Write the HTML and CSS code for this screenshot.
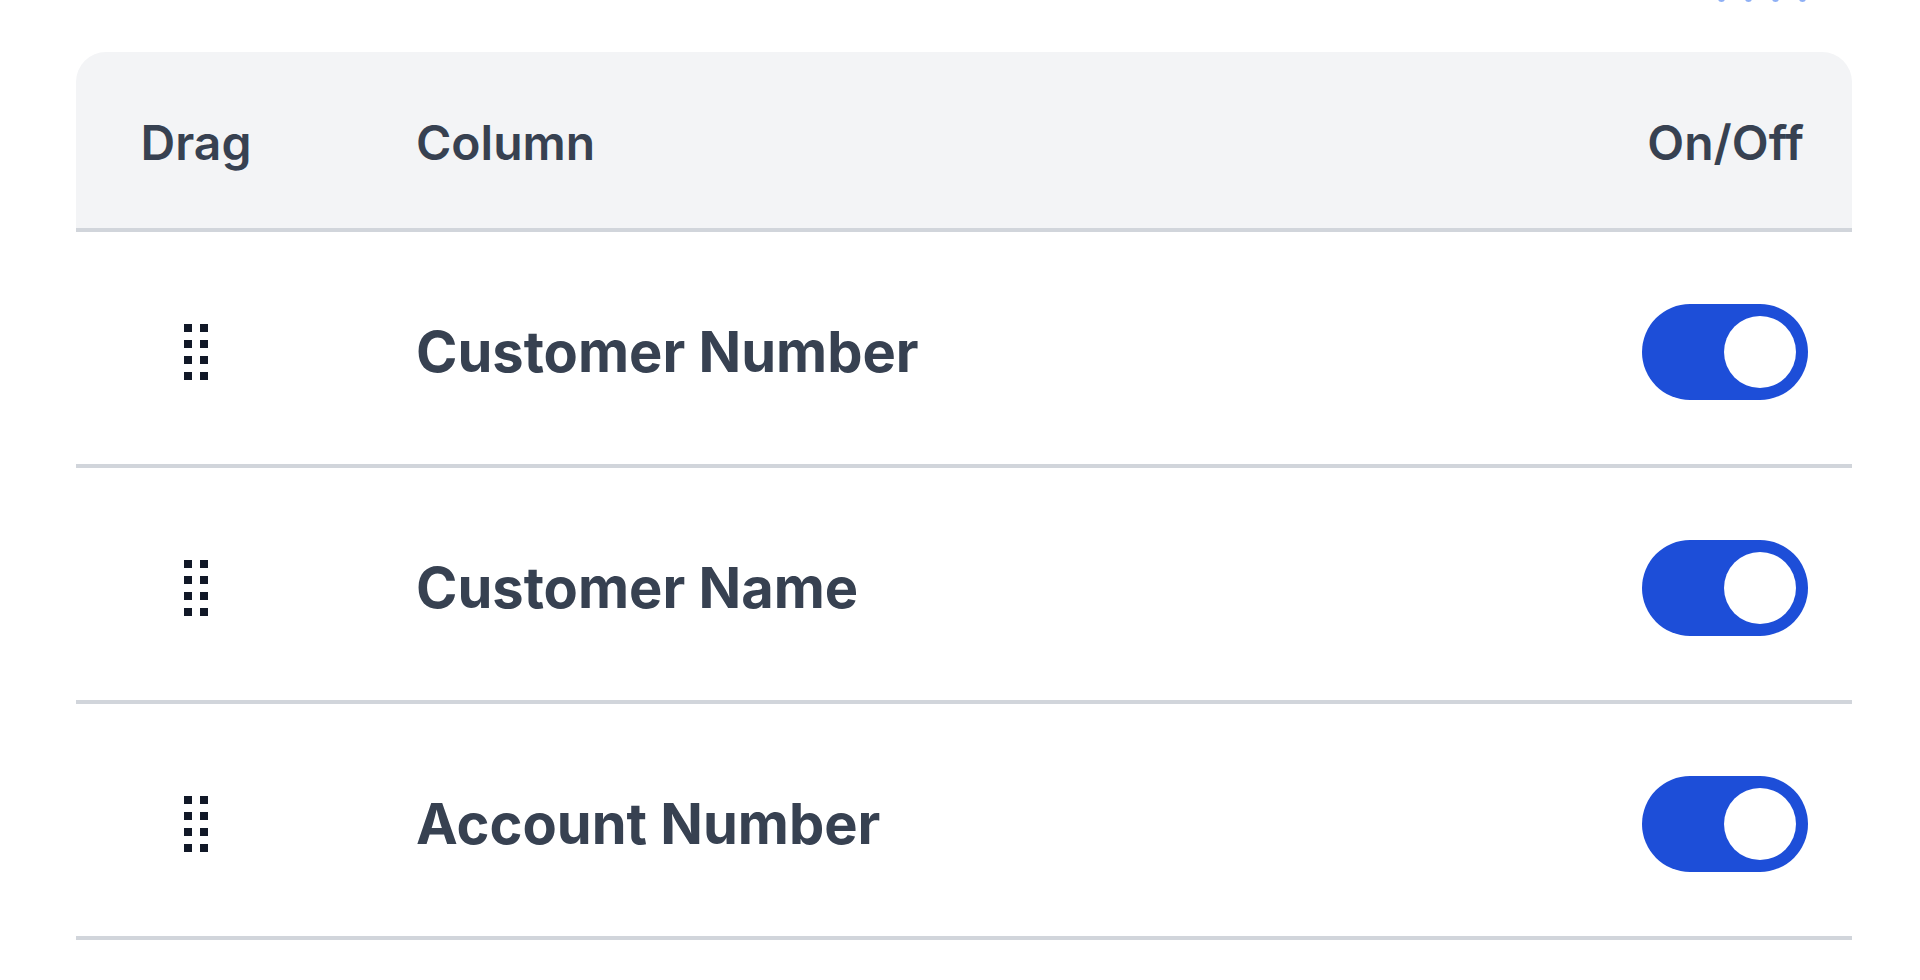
FILE: index.html
```html
<!DOCTYPE html>
<html lang="en">
<head>
<meta charset="utf-8">
<title>Column settings</title>
<link rel="stylesheet" href="styles.css">
</head>
<body>
<div class="page">
  <div class="topbar">
    <span class="mark"></span><span class="mark"></span><span class="mark"></span><span class="mark"></span>
  </div>
  <div class="card">
    <div class="grid head">
      <div class="c-drag">Drag</div>
      <div class="c-col">Column</div>
      <div class="c-on head-on">On/Off</div>
    </div>
    <div class="grid row">
      <div class="c-drag">
        <svg class="grip" width="24" height="56" viewBox="0 0 24 56"><g fill="#111827"><rect x="0" y="0" width="8" height="8"/><rect x="16" y="0" width="8" height="8"/><rect x="0" y="16" width="8" height="8"/><rect x="16" y="16" width="8" height="8"/><rect x="0" y="32" width="8" height="8"/><rect x="16" y="32" width="8" height="8"/><rect x="0" y="48" width="8" height="8"/><rect x="16" y="48" width="8" height="8"/></g></svg>
      </div>
      <div class="c-col name">Customer Number</div>
      <div class="c-on"><span class="toggle"><span class="knob"></span></span></div>
    </div>
    <div class="grid row">
      <div class="c-drag">
        <svg class="grip" width="24" height="56" viewBox="0 0 24 56"><g fill="#111827"><rect x="0" y="0" width="8" height="8"/><rect x="16" y="0" width="8" height="8"/><rect x="0" y="16" width="8" height="8"/><rect x="16" y="16" width="8" height="8"/><rect x="0" y="32" width="8" height="8"/><rect x="16" y="32" width="8" height="8"/><rect x="0" y="48" width="8" height="8"/><rect x="16" y="48" width="8" height="8"/></g></svg>
      </div>
      <div class="c-col name">Customer Name</div>
      <div class="c-on"><span class="toggle"><span class="knob"></span></span></div>
    </div>
    <div class="grid row">
      <div class="c-drag">
        <svg class="grip" width="24" height="56" viewBox="0 0 24 56"><g fill="#111827"><rect x="0" y="0" width="8" height="8"/><rect x="16" y="0" width="8" height="8"/><rect x="0" y="16" width="8" height="8"/><rect x="16" y="16" width="8" height="8"/><rect x="0" y="32" width="8" height="8"/><rect x="16" y="32" width="8" height="8"/><rect x="0" y="48" width="8" height="8"/><rect x="16" y="48" width="8" height="8"/></g></svg>
      </div>
      <div class="c-col name">Account Number</div>
      <div class="c-on"><span class="toggle"><span class="knob"></span></span></div>
    </div>
  </div>
</div>
</body>
</html>
```

FILE: styles.css
```css
html, body {
  margin: 0;
  padding: 0;
  background: #ffffff;
}

body {
  font-family: Inter, "Noto Sans", "Liberation Sans", sans-serif;
  color: #374151;
}

.page {
  padding: 0 68px 0 76px;
}

.topbar {
  height: 2px;
  overflow: hidden;
  display: flex;
  justify-content: flex-end;
  align-items: flex-end;
  gap: 20px;
  padding-right: 46px;
}

.mark {
  width: 7px;
  height: 7px;
  border-radius: 50%;
  background: #8fb0f5;
  flex: none;
}

.card {
  margin-top: 50px;
  background: #ffffff;
  border-radius: 30px 30px 0 0;
}

.grid {
  display: grid;
  grid-template-columns: 240px 1fr auto;
  align-items: center;
  box-sizing: border-box;
  border-bottom: 4px solid #d1d5db;
}

.head {
  height: 180px;
  padding-top: 6px;
  background: #f3f4f6;
  border-radius: 30px 30px 0 0;
  font-size: 48px;
  font-weight: 600;
  line-height: 58px;
}

.row {
  height: 236px;
  padding-top: 8px;
}

.c-drag {
  text-align: center;
  display: flex;
  justify-content: center;
}

.c-col {
  padding-left: 100px;
}

.c-on {
  display: flex;
  justify-content: flex-end;
  padding-right: 44px;
}

.head-on {
  padding-right: 48px;
}

.name {
  font-size: 56px;
  font-weight: 700;
  line-height: 68px;
  color: #374151;
}

.grip {
  display: block;
}

.toggle {
  width: 166px;
  height: 96px;
  box-sizing: border-box;
  padding: 12px;
  border-radius: 48px;
  background: #1d4ed8;
  display: flex;
  justify-content: flex-end;
  align-items: center;
}

.knob {
  width: 72px;
  height: 72px;
  border-radius: 50%;
  background: #ffffff;
}
```
